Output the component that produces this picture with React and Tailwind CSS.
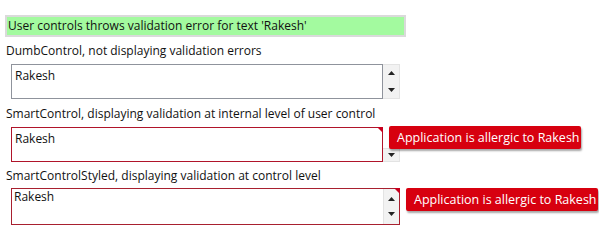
import React from "react";

const font = { fontFamily: '"Open Sans", "Noto Sans", Arial, sans-serif' };

const Arrow = ({ up }) => (
  <svg width="7" height="4" viewBox="0 0 7 4" className="block">
    {up ? <polygon points="3.5,0 7,4 0,4" fill="#222" /> : <polygon points="0,0 7,0 3.5,4" fill="#222" />}
  </svg>
);

const Corner = () => (
  <svg width="6" height="6" viewBox="0 0 6 6" className="absolute right-[-1px] top-[-1px]">
    <polygon points="0,0 6,0 6,6" fill="#c8001e" />
  </svg>
);

const Tip = ({ className }) => (
  <div
    className={`relative h-[23px] w-[192px] shrink-0 rounded-[2px] bg-[#d7000f] pl-[8px] text-[12.5px] leading-[23px] text-white shadow-[1px_2px_2px_rgba(0,0,0,0.35)] ${className}`}
  >
    Application is allergic to Rakesh
  </div>
);

export default function App() {
  return (
    <div className="h-[238px] w-[599px] overflow-hidden bg-white pt-[15px] text-[12px] text-[#111]" style={font}>
      <div className="ml-[5px] h-[22px] w-[401px] border-2 border-[#dadada] bg-[#a3fa9f] pl-[1px] leading-[18px]">
        User controls throws validation error for text 'Rakesh'
      </div>

      <div className="ml-[6px] mt-[6px] h-[15px] leading-[15px]">DumbControl, not displaying validation errors</div>
      <div className="ml-[11px] mt-[6px] flex h-[35px]">
        <div className="w-[372px] border border-[#8f939c] bg-white pl-[3px] pt-[3px] leading-[15px]">Rakesh</div>
        <div className="flex w-[17px] flex-col items-center justify-between border-y border-r border-[#e3e3e3] bg-[#f2f2f2] py-[6px]">
          <Arrow up />
          <Arrow />
        </div>
      </div>

      <div className="ml-[6px] mt-[7px] h-[15px] leading-[15px]">SmartControl, displaying validation at internal level of user control</div>
      <div className="ml-[11px] mt-[6px] flex h-[35px] items-start">
        <div className="relative h-[35px] w-[372px] border border-[#b0142a] bg-white pl-[3px] pt-[3px] leading-[15px]">
          Rakesh
          <Corner />
        </div>
        <div className="mt-[21px] flex h-[14px] w-[17px] flex-col items-center justify-end border-y border-r border-[#e3e3e3] bg-[#f2f2f2] pb-[4px]">
          <Arrow />
        </div>
        <Tip className="ml-[-11px] mt-[-1px]" />
      </div>

      <div className="ml-[6px] mt-[6px] h-[15px] leading-[15px]">SmartControlStyled, displaying validation at control level</div>
      <div className="ml-[11px] mt-[5px] flex h-[37px] items-start">
        <div className="relative flex h-[37px] w-[389px] border border-[#a8202f]">
          <div className="flex-1 bg-white pl-[2px] pt-[0px] leading-[15px]">Rakesh</div>
          <div className="flex w-[16px] flex-col items-center justify-between border-l border-[#e3e3e3] bg-[#f2f2f2] py-[8px]">
            <Arrow up />
            <Arrow />
          </div>
          <Corner />
        </div>
        <Tip className="ml-[6px]" />
      </div>
    </div>
  );
}
